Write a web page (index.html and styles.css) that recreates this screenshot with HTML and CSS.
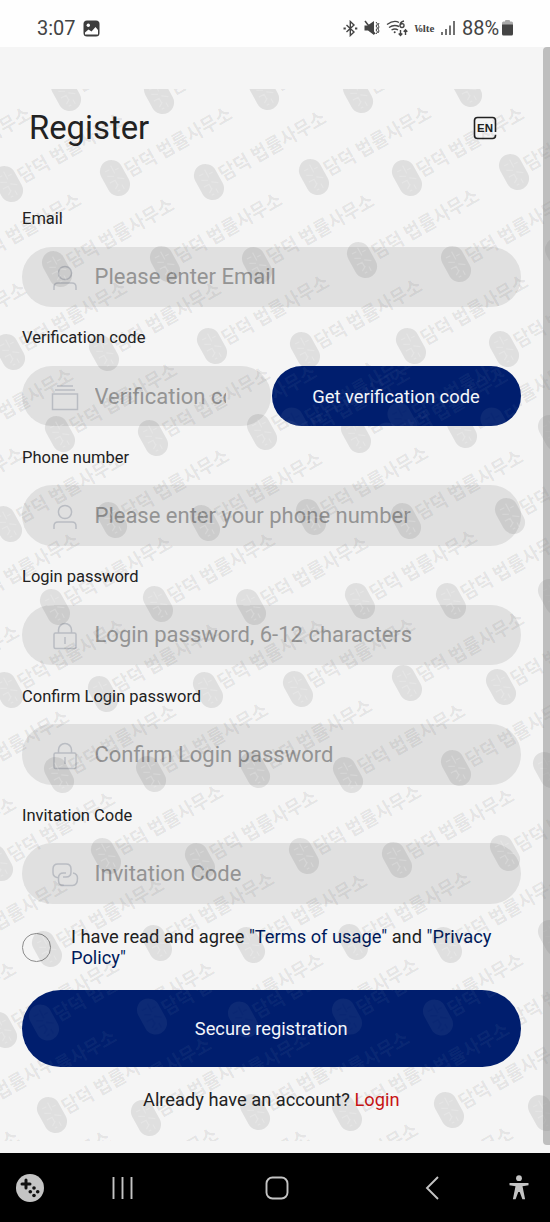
FILE: index.html
```html
<!DOCTYPE html>
<html lang="en">
<head>
<meta charset="utf-8">
<title>Register</title>
<link rel="stylesheet" href="styles.css">
</head>
<body>
<svg class="defs" width="0" height="0" aria-hidden="true">
  <defs>
    <g id="mark">
      <rect class="mark-pill" x="-11.5" y="-19" width="23" height="38" rx="11.5"/>
      <path class="mark-lines" d="M-6 -10h5M2 -13v9M-6 -5l6 3M4 -7h4M-7 2h6v5M2 1l6 4M-5 10l5-3M3 9v5M-1 13h-3"/>
      <text class="mark-text" x="13" y="7" transform="rotate(-1.3)" textLength="120" lengthAdjust="spacingAndGlyphs">담덕 법률사무소</text>
    </g>
    <symbol id="i-user" viewBox="0 0 28 28"><circle cx="14" cy="9" r="6.6"/><path d="M3 26v-3q0-4 4-4h14q4 0 4 4v3"/></symbol>
    <symbol id="i-code" viewBox="0 0 28 28"><path d="M6 2h16M4 6h20M1.500 10h25v15.500h-25z"/></symbol>
    <symbol id="i-lock" viewBox="0 0 28 28"><rect x="3" y="11" width="22" height="15.500" rx="1.500"/><path d="M7.500 11V8a6.500 6.500 0 0 1 13 0v3M14 15v7"/></symbol>
    <symbol id="i-link" viewBox="0 0 28 28"><path d="M7 16.500H6q-4-1-4-5V8q0-5 5-5h8q5 0 5 5v3q0 5-5 5h-3"/><path d="M22 12q4.500 1 4.500 5 0 7.500-5 7.500h-9q-5 0-5-5v-2.500q0-5 5-5H15"/></symbol>
  </defs>
</svg>

<header class="status">
  <span class="clock">3:07</span>
  <svg class="pic" width="17" height="17" viewBox="0 0 17 17"><rect x=".5" y=".5" width="16" height="16" rx="3.500" fill="#3d3d3d"/><circle cx="5.300" cy="5.300" r="1.700" fill="#fff"/><path d="M2 12.500l3.500-3 3 2 4-4.500 2.500 3v4.500h-13z" fill="#fff"/></svg>
  <div class="status-right">
    <svg width="15" height="17" viewBox="0 0 15 17" class="ln"><path d="M3.500 5l7.500 7-3.700 3.500v-14L11 5l-7.500 7"/><path d="M.5 8.500h2.300M12 8.500h2.300" stroke-width="2"/></svg>
    <svg width="16" height="16" viewBox="0 0 16 16"><path d="M.5 5.500h3L10 1v14l-6-4.500H.5z" fill="#444"/><path d="M1 1l10 13" stroke="#444" stroke-width="1.500"/><path d="M12 2l1.500 2L12 6l1.500 2-1.500 2 1.500 2-1.500 2M15 3l-1 2 1 2-1 2 1 2-1 2" fill="none" stroke="#444"/></svg>
    <svg width="23" height="17" viewBox="0 0 23 17" class="ln"><path d="M1 4.500q7-5 12-2M3 7.500q5-3.500 10-1M5.500 10q3.500-2 6.500 0"/><circle cx="8.700" cy="12.300" r="1" fill="#444" stroke="none"/><path d="M14.500 10v5M12.700 13.500l1.800 2 1.800-2M19.500 15v-5M17.700 11.800l1.800-2 1.800 2"/><path d="M18 1q-4 1-4 4.500 0 2 2 2t2-2-2-1.700-2 1.700"/></svg>
    <span class="volte"><i>V</i>o<b>lte</b></span>
    <svg width="15" height="16" viewBox="0 0 15 16"><path d="M1 12v3M5 9v6M9 5.500v9.500M13 1v14" stroke="#444" stroke-width="1.500"/></svg>
    <span class="pct">88%</span>
    <svg width="11" height="16" viewBox="0 0 11 16"><rect x="3" width="5" height="3" rx="1" fill="#aaa"/><rect y="1.500" width="11" height="4" rx="1.500" fill="#aaa"/><path d="M0 4.500h11V14q0 1.500-1.500 1.500h-8Q0 15.500 0 14z" fill="#444"/></svg>
  </div>
</header>

<main class="page">
  <div class="title-row">
    <h1>Register</h1>
    <svg class="lang" width="24" height="24" viewBox="0 0 24 24"><path d="M22.500 16V4.500q0-3-3-3h-15q-3 0-3 3v15q0 3 3 3h15q3 0 3-3v-.7" fill="none" stroke="#222" stroke-width="1.600"/><text x="12" y="16.300" text-anchor="middle">EN</text></svg>
  </div>

  <form class="form">
    <div class="group"><label>Email</label>
      <div class="field"><svg><use href="#i-user"/></svg><span>Please enter Email</span></div></div>
    <div class="group"><label>Verification code</label>
      <div class="pair">
        <div class="field"><svg><use href="#i-code"/></svg><span>Verification code</span></div>
        <div class="btn"><svg class="btn-mark" viewBox="271.500 365.500 249 60.500" data-marks="295,425 402,420 495,425 199,436 92,440 292,438 390,440"></svg><span>Get verification code</span></div>
      </div></div>
    <div class="group"><label>Phone number</label>
      <div class="field"><svg><use href="#i-user"/></svg><span>Please enter your phone number</span></div></div>
    <div class="group"><label>Login password</label>
      <div class="field"><svg><use href="#i-lock"/></svg><span>Login password, 6-12 characters</span></div></div>
    <div class="group"><label>Confirm Login password</label>
      <div class="field"><svg><use href="#i-lock"/></svg><span>Confirm Login password</span></div></div>
    <div class="group"><label>Invitation Code</label>
      <div class="field"><svg><use href="#i-link"/></svg><span>Invitation Code</span></div></div>
  </form>

  <div class="agree">
    <span class="radio"></span>
    <p>I have read and agree <a>"Terms of usage"</a> and <a>"Privacy<br>Policy"</a></p>
  </div>

  <div class="btn submit"><svg class="btn-mark" viewBox="22 990.500 498.500 76.500" data-marks="44,1023 152,1017 243,1020 347,1017 438,1018 -1,1101 94,1109 192,1104 292,1103 392,1094"></svg><span>Secure registration</span></div>
  <p class="login">Already have an account? <a>Login</a></p>

  <svg class="watermark" viewBox="0 89 550 1052" width="550" height="1052" data-marks="
    66,93 159,96 264,92 358,95 467,89
    -86,178 8,184 115,178 209,182 314,177 407,178 514,172
    -36,264 57,269 165,264 257,265 362,260 456,264 560,256
    -91,353 10,352 104,353 212,346 305,350 411,346 504,349
    -44,439 60,434 153,438 262,432 356,435 462,430 553,433
    -94,518 7,524 112,520 205,523 311,517 406,521 510,516
    -38,604 55,607 158,604 251,607 360,601 451,601 553,597
    -98,696 8,690 103,694 208,690 298,689 407,683 501,687
    -48,781 59,775 151,774 255,770 348,775 456,768 548,770
    -101,868 -2,863 106,856 200,861 304,856 397,860 505,853
    -50,950 47,949 157,943 250,945 353,942 447,945 553,938
    -101,1033 2,1030 97,1033 206,1024 301,1029 406,1024 500,1028
    -48,1119 52,1115 146,1118 255,1112 347,1113 449,1110 543,1113
    -98,1201 -6,1202 101,1199 192,1201 301,1194 396,1198"></svg>
  <div class="scrollbar"></div>
</main>

<nav class="nav">
  <svg class="game" width="28" height="28" viewBox="0 0 28 28"><circle cx="14" cy="14" r="14" fill="#c4c4c4"/><path d="M10 6v8M6 10h8" stroke="#111" stroke-width="3" stroke-linecap="round"/><g fill="#111"><circle cx="18" cy="14" r="1.800"/><circle cx="14.300" cy="17.800" r="1.800"/><circle cx="21.700" cy="17.800" r="1.800"/><circle cx="18" cy="21.500" r="1.800"/></g></svg>
  <svg class="recent" width="22" height="22" viewBox="0 0 22 22"><path d="M1.500 0v22M10.500 0v22M19.500 0v22" stroke="#c4c4c4" stroke-width="1.900"/></svg>
  <svg class="home" width="24" height="24" viewBox="0 0 24 24"><rect x="1.500" y="1.500" width="21" height="21" rx="6" fill="none" stroke="#c4c4c4" stroke-width="1.900"/></svg>
  <svg class="back" width="14" height="24" viewBox="0 0 14 24"><path d="M13 1L2 12l11 11" fill="none" stroke="#c4c4c4" stroke-width="1.900"/></svg>
  <svg class="access" width="20" height="25" viewBox="0 0 20 25"><circle cx="10" cy="3.200" r="2.900" fill="#c4c4c4"/><path d="M.5 8h19v2.200l-6 1 2.600 13h-2.700L10.700 17H9.300L6.600 24.200H3.900l2.600-13-6-1z" fill="#c4c4c4"/></svg>
</nav>
<script src="watermark.js"></script>
</body>
</html>
```
FILE: styles.css
```css
* { box-sizing: border-box; }
body { margin: 0; width: 550px; height: 1222px; overflow: hidden; display: flex; flex-direction: column; background: #f5f5f5; font-family: Roboto, "Noto Sans CJK KR", sans-serif; color: #222; }
p, h1 { margin: 0; font-weight: 400; }
.defs { position: absolute; }

.status { height: 47px; flex: none; background: #fefefe; display: flex; align-items: center; padding: 9px 37px 0 37px; color: #444; }
.clock { font-size: 20px; width: 46px; }
.status-right { margin-left: auto; display: flex; align-items: center; gap: 6px; }
.ln { fill: none; stroke: #444; stroke-width: 1.4; }
.volte { font: 700 8px "Liberation Serif", serif; width: 21px; margin-left: -1px; white-space: nowrap; }
.volte i { font-size: 10px; margin-right: -2px; }
.volte b { font-size: 11px; }
.pct { font-size: 20px; width: 36px; white-space: nowrap; margin-right: -2px; }

.page { flex: none; height: 1106px; position: relative; padding: 0 29.5px 0 22px; }
.title-row { display: flex; justify-content: space-between; align-items: center; padding: 60px 24px 0 7px; height: 102px; }
h1 { font-size: 32.8px; line-height: 42px; }
.lang text { font: 700 11.5px "Liberation Sans", sans-serif; fill: #222; }

.form { padding-top: 56px; }
.group { height: 119.4px; }
label { display: block; height: 28px; line-height: 28px; font-size: 16.5px; margin-bottom: 13.5px; }
.field { height: 60.5px; border-radius: 31px; background: #e0e0e0; display: flex; align-items: center; padding: 0 45px 0 29px; }
.field svg { width: 28px; height: 28px; flex: none; margin: 3px 15.5px 0 0; fill: none; stroke: #b9bcc2; stroke-width: 1.5; }
.field span { font-size: 22px; color: #949494; white-space: nowrap; overflow: hidden; line-height: 30px; padding-top: 1px; }
.pair { display: grid; grid-template-columns: 249px 249px; gap: .5px; }
.btn { position: relative; z-index: 1; height: 60.5px; border-radius: 39px; overflow: hidden; background: #001f6e; color: #f3f5fa; display: flex; align-items: center; justify-content: center; font-size: 18.35px; }
.btn span { position: relative; }
.btn-mark { position: absolute; inset: 0; width: 100%; height: 100%; fill: #fff; stroke: #001f6e; opacity: .6; }

.agree { display: flex; align-items: center; height: 42px; margin-top: 5px; font-size: 18.3px; line-height: 21px; }
.radio { width: 28.5px; height: 28.5px; border: 1.3px solid #8c8c8c; border-radius: 50%; margin: 0 20.5px 0 0; }
.agree a { color: #001a5c; }
.submit { height: 76.5px; margin-top: 22px; font-size: 18.25px; }
.login { margin-top: 22px; text-align: center; font-size: 18.25px; line-height: 22px; }
.login a { color: #c81414; }

.watermark { position: absolute; left: 0; top: 42px; pointer-events: none; fill: #000; stroke: #fff; overflow: hidden; }
.mark-pill { stroke: none; fill-opacity: .085; }
.mark-lines { fill: none; stroke-opacity: .2; stroke-width: 1.2; }
.mark-text { stroke: none; fill-opacity: .08; font: 700 19.5px "Noto Sans CJK KR", sans-serif; }
.scrollbar { position: absolute; right: 0; top: 0; width: 7px; height: 1098px; border-radius: 4px 0 0 4px; background: #7777776e; }

.nav { height: 69px; flex: none; background: #000; display: flex; align-items: center; padding: 0 21px 0 16px; }
.recent { margin-left: 68px; }
.home { margin-left: 131px; }
.back { margin-left: 136px; }
.access { margin-left: auto; }
```
FILE: watermark.js
```js
const NS = "http://www.w3.org/2000/svg";
document.querySelectorAll("[data-marks]").forEach((svg) => {
  svg.dataset.marks.trim().split(/\s+/).forEach((pair) => {
    const [x, y] = pair.split(",");
    const use = document.createElementNS(NS, "use");
    use.setAttribute("href", "#mark");
    use.setAttribute("transform", `translate(${x} ${y}) rotate(-28.5)`);
    svg.appendChild(use);
  });
});
```
